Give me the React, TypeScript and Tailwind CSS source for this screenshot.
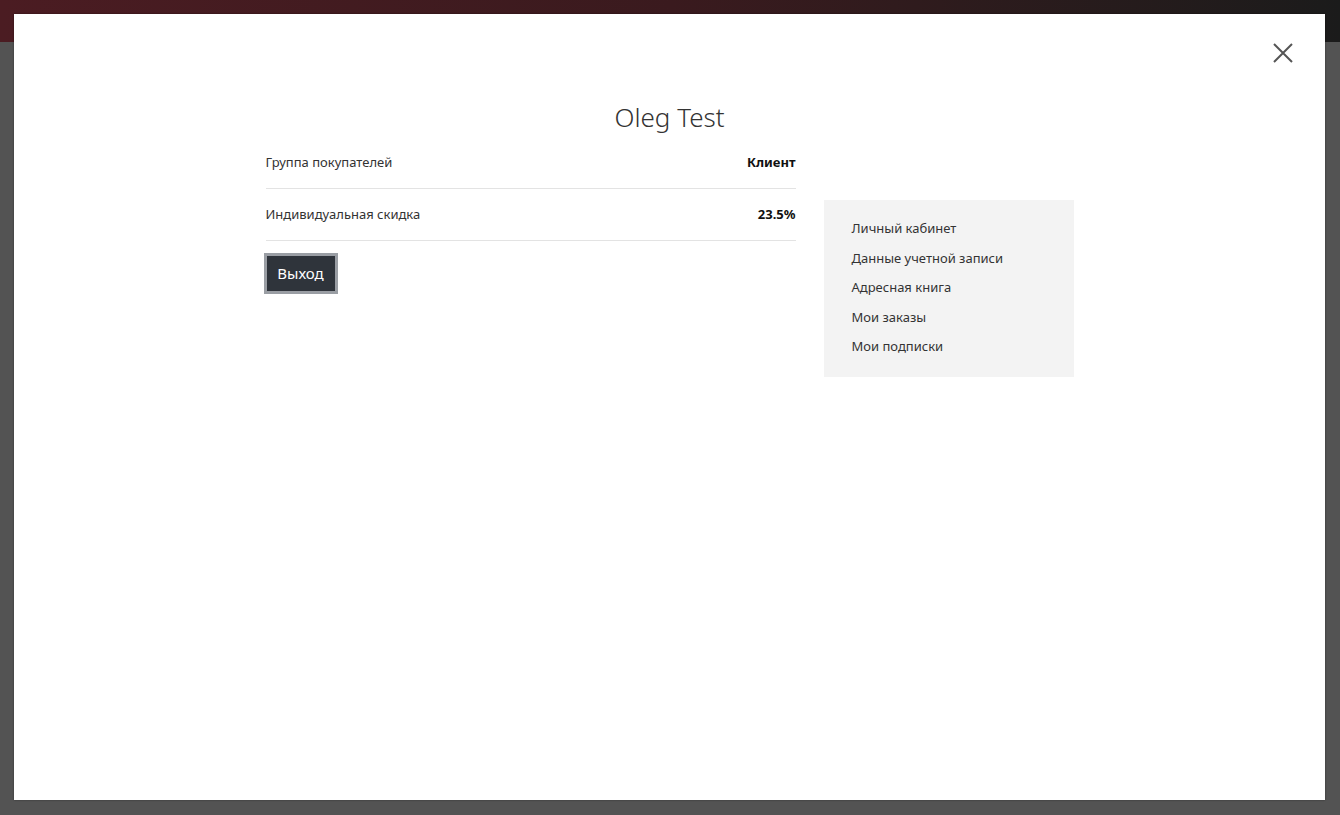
import React from 'react';

const rows = [
  { label: 'Группа покупателей', value: 'Клиент' },
  { label: 'Индивидуальная скидка', value: '23.5%' },
];

const links = ['Личный кабинет', 'Данные учетной записи', 'Адресная книга', 'Мои заказы', 'Мои подписки'];

export default function App() {
  return (
    <div className="relative w-[1340px] h-[815px] overflow-hidden bg-[#535353]" style={{ fontFamily: '"Noto Sans", "Open Sans", sans-serif' }}>
      {/* page header behind the overlay */}
      <div className="h-[42px] w-full bg-gradient-to-r from-[#4b1c22] via-[#3a1a1e] to-[#1b1b1b]" />

      {/* modal */}
      <div className="absolute left-[14px] top-[14px] w-[1311px] h-[786px] bg-white shadow-[0_0_2px_rgba(0,0,0,0.4)]">
        <button className="absolute right-[31px] top-[28px] w-[22px] h-[22px] text-[#555]">
          <svg viewBox="0 0 22 22" width="22" height="22" fill="none" stroke="currentColor" strokeWidth="2">
            <path d="M2 2L20 20M20 2L2 20" />
          </svg>
        </button>

        <div className="w-[808px] mx-auto pt-[84px]">
          <h1 className="text-center text-[26px] font-light leading-[38px] text-[#333]">Oleg Test</h1>

          <div className="flex gap-[28px] mt-[1px]">
            <div className="w-[530px]">
              {rows.map(r => (
                <div key={r.label} className="flex items-center justify-between h-[52px] border-b border-[#e3e3e3] text-[13px] text-[#333]">
                  <span>{r.label}</span>
                  <span className="font-bold text-[#111]">{r.value}</span>
                </div>
              ))}
              <button className="mt-[12px] -ml-[2px] w-[74px] h-[41px] bg-[#2f343b] border-[3px] border-[#9a9ea4] text-white text-[15px]">
                Выход
              </button>
            </div>

            <div className="w-[250px] mt-[63px] h-[177px] bg-[#f3f3f3] px-[28px] py-[14px]">
              {links.map(l => (
                <div key={l} className="h-[29.6px] flex items-center text-[13px] text-[#333]">{l}</div>
              ))}
            </div>
          </div>
        </div>
      </div>
    </div>
  );
}
